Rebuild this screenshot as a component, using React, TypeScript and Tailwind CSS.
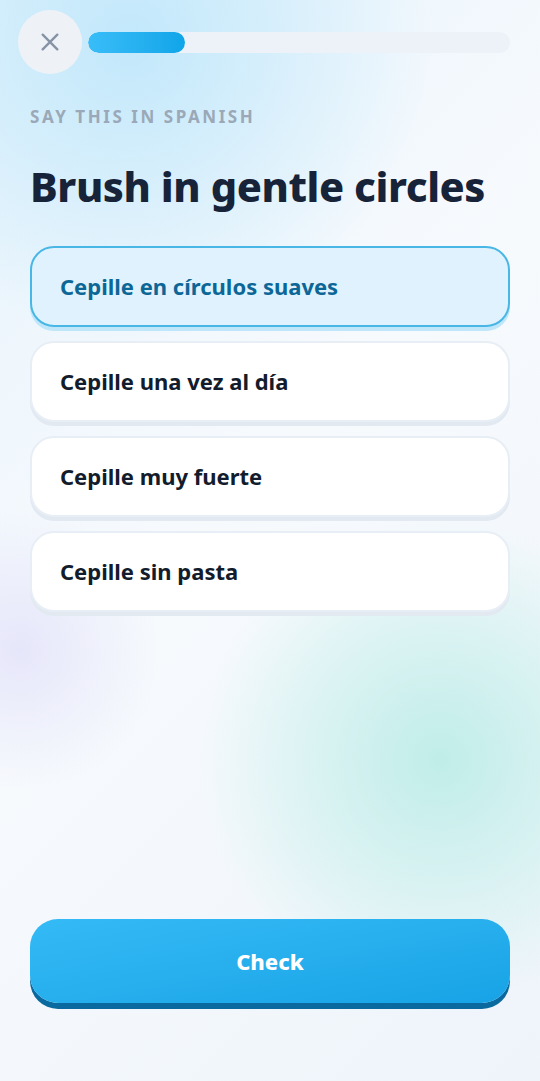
import React from 'react';

const options = [
  { label: 'Cepille en círculos suaves', selected: true },
  { label: 'Cepille una vez al día', selected: false },
  { label: 'Cepille muy fuerte', selected: false },
  { label: 'Cepille sin pasta', selected: false },
];

const App: React.FC = () => {
  return (
    <div
      className="min-h-[1081px] w-full flex flex-col px-[30px] pb-[78px] bg-[#eef5fb] bg-[radial-gradient(circle_at_130px_40px,#c2e8fb_0px,rgba(194,232,251,0.6)_120px,rgba(238,245,251,0)_300px),radial-gradient(circle_at_440px_760px,#c0ede8_0px,rgba(195,238,234,0.6)_110px,rgba(238,245,251,0)_240px),radial-gradient(circle_at_20px_650px,#e6e6fa_0px,rgba(238,245,251,0)_140px),linear-gradient(135deg,#e6f3fc_0%,#f7fafd_45%,#eef4fa_100%)]"
      style={{ fontFamily: '"Noto Sans", "Open Sans", sans-serif' }}
    >
      {/* Top bar */}
      <div className="flex items-center gap-[6px] pt-[10px] -ml-[12px]">
        <button className="w-[64px] h-[64px] shrink-0 rounded-full bg-[#eef2f7] flex items-center justify-center">
          <svg width="22" height="22" viewBox="0 0 24 24" fill="none" stroke="#8593a5" strokeWidth="2.6" strokeLinecap="round">
            <path d="M4 4L20 20M20 4L4 20" />
          </svg>
        </button>
        <div className="flex-1 h-[21px] rounded-full bg-[#edf2f8] overflow-hidden">
          <div className="h-full w-[23%] rounded-full bg-gradient-to-r from-[#38bdf8] to-[#0ea5e9]" />
        </div>
      </div>

      <p className="mt-[34px] text-[17px] font-bold tracking-[0.15em] text-[#9aa8b7] leading-none">SAY THIS IN SPANISH</p>

      <h1 className="mt-[41px] text-[41.5px] font-extrabold text-[#172338] leading-none tracking-[-0.01em]">Brush in gentle circles</h1>

      <div className="mt-[38px] flex flex-col gap-[14px]">
        {options.map((o) =>
          o.selected ? (
            <div
              key={o.label}
              className="h-[81px] rounded-[24px] border-2 border-[#48b7e6] bg-[#e0f2fd] shadow-[0_4px_0_#bfe6f9] flex items-center px-[28px]"
            >
              <span className="text-[22px] font-bold text-[#0c6797]">{o.label}</span>
            </div>
          ) : (
            <div
              key={o.label}
              className="h-[81px] rounded-[24px] border-2 border-[#e8eef5] bg-white shadow-[0_4px_0_#e2e9f1] flex items-center px-[28px]"
            >
              <span className="text-[22px] font-bold text-[#121c2c]">{o.label}</span>
            </div>
          )
        )}
      </div>

      <div className="flex-1" />

      <button className="h-[84px] w-full rounded-[28px] bg-gradient-to-br from-[#34baf5] to-[#16a3e6] shadow-[0_6px_0_#0a6aa0] flex items-center justify-center">
        <span className="text-[22px] font-extrabold text-white">Check</span>
      </button>
    </div>
  );
};

export default App;
